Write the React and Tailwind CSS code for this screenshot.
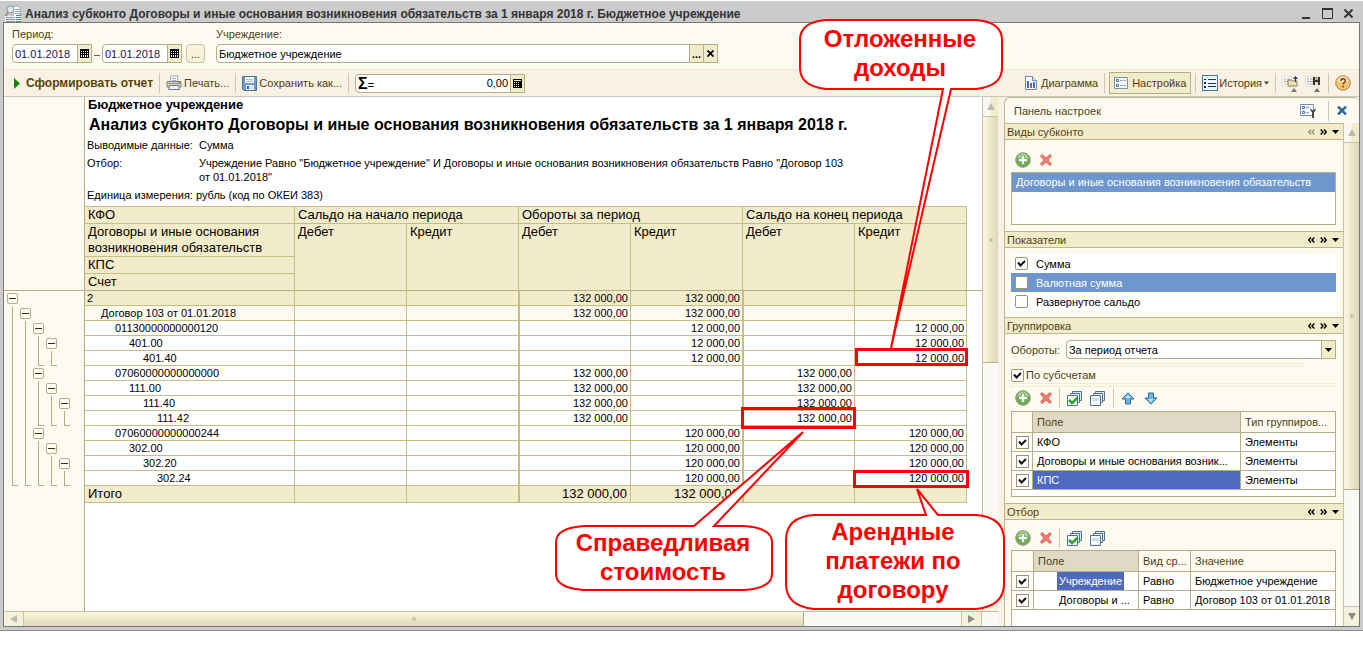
import { useState } from 'react'
import clsx from 'clsx'

const entries = [
  { name: '2', tree: 'b', cells: ['', '', '132 000,00', '132 000,00', '', ''], tone: 'bg-[#f2eccb]' },
  { name: 'Договор 103 от 01.01.2018', tree: 'lb', cells: ['', '', '132 000,00', '132 000,00', '', ''], tone: 'bg-[#fdfbf0]' },
  { name: '01130000000000120', tree: 'llb', cells: ['', '', '', '12 000,00', '', '12 000,00'] },
  { name: '401.00', tree: 'lllb', cells: ['', '', '', '12 000,00', '', '12 000,00'] },
  { name: '401.40', tree: 'llee', cells: ['', '', '', '12 000,00', '', '12 000,00'] },
  { name: '07060000000000000', tree: 'llb', cells: ['', '', '132 000,00', '', '132 000,00', ''] },
  { name: '111.00', tree: 'lllb', cells: ['', '', '132 000,00', '', '132 000,00', ''] },
  { name: '111.40', tree: 'llllb', cells: ['', '', '132 000,00', '', '132 000,00', ''] },
  { name: '111.42', tree: 'lleee', cells: ['', '', '132 000,00', '', '132 000,00', ''] },
  { name: '07060000000000244', tree: 'llb', cells: ['', '', '', '120 000,00', '', '120 000,00'] },
  { name: '302.00', tree: 'lllb', cells: ['', '', '', '120 000,00', '', '120 000,00'] },
  { name: '302.20', tree: 'llllb', cells: ['', '', '', '120 000,00', '', '120 000,00'] },
  { name: '302.24', tree: 'eeeee', cells: ['', '', '', '120 000,00', '', '120 000,00'] },
]

const indents = ['pl-0.5', 'pl-4', 'pl-[30px]', 'pl-11', 'pl-[58px]', 'pl-[30px]', 'pl-11', 'pl-[58px]', 'pl-[72px]', 'pl-[30px]', 'pl-11', 'pl-[58px]', 'pl-[72px]']

/* ---------- icons ---------- */

const ReportIcon = () => (
  <svg width="16" height="18" viewBox="0 0 16 18" className="shrink-0">
    <path d="M8 1h5l2 2v9H8z" fill="#fff" stroke="#8e9aa8" />
    <path d="M10 4.500h4M10 6.500h4M10 8.500h4" stroke="#8e9aa8" />
    <path d="M0 11h10v7H0zM10 11h6v7h-6z" fill="#f3f6fa" />
    <circle cx="5.500" cy="4.500" r="3.500" fill="#d9ecf7" stroke="#8a8f96" />
    <path d="M3 7.500 .5 11" stroke="#b98a5a" strokeWidth="2" />
    <path d="M1 12.500h9M1 14.500h9M1 16.500h9" stroke="#8b98a6" />
    <path d="M11 10.500h5M11 12.500h5M11 14.500h5M11 16.500h5" stroke="#4d7fc0" />
  </svg>
)

const CalendarIcon = () => (
  <svg width="9" height="9" viewBox="0 0 9 9" shapeRendering="crispEdges">
    <path d="M0 0h9v9H0z" fill="#000" />
    <path d="M1 2h1v1H1zM3 2h1v1H3zM5 2h1v1H5zM7 2h1v1H7zM1 4h1v1H1zM3 4h1v1H3zM5 4h1v1H5zM7 4h1v1H7zM1 6h1v2H1zM3 6h1v2H3zM5 6h1v2H5zM7 6h1v2H7z" fill="#fff" />
  </svg>
)

const CalcIcon = () => (
  <svg width="9" height="9" viewBox="0 0 9 9" shapeRendering="crispEdges">
    <path d="M0 0h9v9H0z" fill="#000" />
    <path d="M1 1h7v1H1zM1 3h1v1H1zM3 3h1v1H3zM5 3h1v1H5zM1 5h1v1H1zM3 5h1v1H3zM5 5h1v1H5zM1 7h1v1H1zM3 7h1v1H3zM5 7h1v1H5z" fill="#f2eccb" />
  </svg>
)

const PrinterIcon = () => (
  <svg width="16" height="16" viewBox="0 0 16 16" className="shrink-0">
    <path d="M5 1h7l-1 6H4z" fill="#fff" stroke="#9aa6b8" />
    <path d="M1 6.500h14v5.500H1z" fill="#d3d0c8" stroke="#86837b" />
    <path d="M1 8.500h14" stroke="#9d9a92" />
    <path d="M3.500 10.500h9l1 4h-11z" fill="#f5f3ea" stroke="#6f7c8f" />
    <circle cx="13" cy="8" r="1" fill="#3fae3f" />
    <path d="M6 3.500h4M6 5.500h4" stroke="#8fb3dc" />
  </svg>
)

const SaveIcon = () => (
  <svg width="15" height="15" viewBox="0 0 15 15" className="shrink-0">
    <path d="M.5.5h14v14H2L.5 13z" fill="#6f9cc0" stroke="#4c7899" />
    <path d="M3 1h9v6H3z" fill="#f2f7fb" />
    <path d="M4 3.500h7M4 5.500h7" stroke="#b4c6d6" />
    <path d="M4 9h8v5H4z" fill="#dfe8ee" />
    <path d="M5 10h2v3H5z" fill="#3f6c90" />
  </svg>
)

const ChartIcon = () => (
  <svg width="12" height="14" viewBox="0 0 12 14" className="shrink-0">
    <path d="M.5.5h7l4 4v9H.5z" fill="#fbfdff" stroke="#6f8aa8" />
    <path d="M7.500.5v4h4" fill="#dce8f4" stroke="#6f8aa8" />
    <path d="M2 5h2v7H2z" fill="#3f73c9" />
    <path d="M5 7h2v5H5z" fill="#d8433b" />
    <path d="M8 6h2v6H8z" fill="#3f73c9" />
  </svg>
)

const SettingsIcon = () => (
  <svg width="14" height="12" viewBox="0 0 14 12" className="shrink-0">
    <path d="M.5.5h13v11H.5z" fill="#f7fafd" stroke="#7393b5" />
    <path d="M2.500 2.500h2v2h-2zM2.500 7.500h2v2h-2z" fill="#fff" stroke="#4a6fa5" />
    <path d="M6 3.500h3M10 3.500h2M6 8.500h3M10 8.500h2" stroke="#8aa0ba" />
  </svg>
)

const HistoryIcon = () => (
  <svg width="16" height="16" viewBox="0 0 16 16" shapeRendering="crispEdges" className="shrink-0">
    <path d="M.5.5h15v15H.5z" fill="#eaf6fd" stroke="#3d7ab0" />
    <path d="M2 4h2v1H2zM2 7h2v2H2zM2 11h2v2H2z" fill="#112233" />
    <path d="M6 4.500h8M6 8h8M6 11.500h8" stroke="#123a5e" />
  </svg>
)

const LoadSettingsIcon = () => (
  <svg width="17" height="17" viewBox="0 0 17 17" className="shrink-0">
    <path d="M.5 1.500h9v10h-9z" fill="#fff" stroke="#e3e1d6" />
    <path d="M2 4h2M5 4h3M2 6.500h2M5 6.500h3M2 9h2M5 9h3" stroke="#9a9a92" />
    <path d="M6 5h4l1 1h4v5H6z" fill="#f0e0ac" stroke="#8b8368" />
    <path d="M13.500 7V2" stroke="#1d2f74" />
    <path d="M11 4l2.500-3L16 4z" fill="#1d2f74" />
    <path d="M9 17h6l-3-4z" fill="#77746c" />
  </svg>
)

const StoreSettingsIcon = () => (
  <svg width="17" height="17" viewBox="0 0 17 17" className="shrink-0">
    <path d="M.5 1.500h9v10h-9z" fill="#fff" stroke="#e3e1d6" />
    <path d="M2 4h2M5 4h3M2 6.500h2M5 6.500h3M2 9h2M5 9h3" stroke="#9a9a92" />
    <path d="M8 2h7v8H8z" fill="#3a362c" />
    <path d="M10 2h3v3h-3z" fill="#b9b5a5" />
    <path d="M10 7h3v3h-3z" fill="#ddd9c9" />
    <path d="M9 17h6l-3-4z" fill="#77746c" />
  </svg>
)

const HelpIcon = () => (
  <svg width="16" height="16" viewBox="0 0 16 16" className="shrink-0">
    <circle cx="8" cy="8" r="7.300" fill="#f6c16b" stroke="#a58a63" />
    <path d="M2.500 6.500a5.500 5 0 0 1 11 0q-5.500 2-11 0z" fill="#fbe3b5" />
    <path d="M5.800 6q0-2.300 2.300-2.300T10.300 6c0 1.400-2.200 1.600-2.200 3.300" fill="none" stroke="#6d4410" strokeWidth="1.500" />
    <path d="M7.300 10.800h1.600v1.600H7.300z" fill="#6d4410" />
  </svg>
)

const AddIcon = () => (
  <svg width="16" height="16" viewBox="0 0 16 16" className="shrink-0">
    <circle cx="8" cy="8" r="7.300" fill="#6fae54" stroke="#8a9a80" />
    <path d="M2.500 6.500a5.500 5 0 0 1 11 0q-5.500 2-11 0z" fill="#a8d493" />
    <path d="M6.500 3.500h3v3h3v3h-3v3h-3v-3h-3v-3h3z" fill="#fff" stroke="#5c9444" strokeWidth=".6" />
  </svg>
)

const RemoveIcon = () => (
  <svg width="12" height="12" viewBox="0 0 12 12" className="shrink-0">
    <path d="M2 .5 6 4 10 .5 11.500 2 8 6l3.500 4-1.500 1.500L6 8l-4 3.500L.5 10 4 6 .5 2z" fill="#f07d73" stroke="#d9534a" strokeWidth=".8" />
  </svg>
)

const StackIcon = ({ checked }) => (
  <svg width="16" height="15" viewBox="0 0 16 15" className="shrink-0">
    <path d="M5.500.5h9v9h-9z" fill="#d7e8f5" stroke="#4d7391" />
    <path d="M3.500 2.500h9v9h-9z" fill="#e6f1f9" stroke="#4d7391" />
    <path d="M.5 4.500h10v10H.5z" fill="#f6fafd" stroke="#4d7391" />
    {checked ? (
      <path d="m2 9 3 3L11 6.500" fill="none" stroke="#35a02c" strokeWidth="2.500" />
    ) : (
      <path d="M2 7h7v3H2z" fill="#c9e0f3" />
    )}
  </svg>
)

const MoveIcon = ({ down }) => (
  <svg width="14" height="13" viewBox="0 0 14 13" className={clsx('shrink-0', down && 'rotate-180')}>
    <path d="M7 .8 13 7H9.500v5h-5V7H1z" fill="#6db5e6" stroke="#2c6d9f" />
    <path d="M7 2.500 10 6H4z" fill="#b9dff6" />
  </svg>
)

const Chevrons = ({ flip, muted }) => (
  <svg width="7" height="6" viewBox="0 0 7 6" className={clsx(flip && 'rotate-180', muted ? 'text-[#99947e]' : 'text-black')}>
    <path d="M3 .5.800 3 3 5.500M6.300.5 4 3l2.300 2.500" fill="none" stroke="currentColor" strokeWidth="1.400" />
  </svg>
)

const Caret = ({ className }) => (
  <svg width="7" height="4" viewBox="0 0 7 4" className={className}>
    <path d="M0 0h7L3.500 4z" fill="currentColor" />
  </svg>
)

/* ---------- small controls ---------- */

const Divider = () => <span className="h-5 w-px shrink-0 bg-[#cdc8b4]" />

function ToolButton({ icon, children, className, label }) {
  return (
    <button type="button" aria-label={label} className={clsx('flex items-center whitespace-nowrap', className)}>
      {icon}
      {children}
    </button>
  )
}

function DateField({ id, label }) {
  return (
    <div className="flex h-[19px] w-20 rounded-l-sm border border-[#b5ad84] bg-white">
      <input id={id} aria-label={label} defaultValue="01.01.2018" className="w-16 min-w-0 px-0.5 text-[#1c1440] outline-none" />
      <button type="button" aria-label="Выбрать дату" className="flex flex-1 items-center justify-center border-l border-[#b5ad84] bg-[#f2eccb]">
        <CalendarIcon />
      </button>
    </div>
  )
}

function Check({ id, label, square, defaultChecked = false }) {
  return (
    <span className="relative flex size-[13px] shrink-0">
      <input
        id={id}
        type="checkbox"
        aria-label={label}
        defaultChecked={defaultChecked}
        className={clsx('peer size-[13px] appearance-none border border-[#9c946c] bg-white', !square && 'rounded-xs')}
      />
      <svg viewBox="0 0 13 13" className="pointer-events-none absolute inset-0 hidden peer-checked:block">
        <path d="m3 5.500 2.500 3L10 4" fill="none" stroke="#111" strokeWidth="2" />
      </svg>
    </span>
  )
}

function Section({ title, atStart, children, className }) {
  return (
    <section>
      <header className="flex h-[17px] items-center border-y border-[#bdb58c] bg-[#f2eccb] pr-1">
        <h2 className="flex-1 pl-0.5 leading-4">{title}</h2>
        <div className="flex items-center gap-[5px]">
          <button type="button" aria-label="Назад"><Chevrons muted={atStart} /></button>
          <button type="button" aria-label="Вперед"><Chevrons flip /></button>
          <button type="button" aria-label="Меню"><Caret className="text-black" /></button>
        </div>
      </header>
      <div className={clsx('pr-[7px] pl-1.5', className)}>{children}</div>
    </section>
  )
}

function EditTools({ stacks, moves }) {
  return (
    <div className="flex items-center gap-[7px] pl-1">
      <button type="button" aria-label="Добавить"><AddIcon /></button>
      <button type="button" aria-label="Удалить" className="pl-0.5"><RemoveIcon /></button>
      {stacks && (
        <>
          <Divider />
          <button type="button" aria-label="Установить флажки"><StackIcon checked /></button>
          <button type="button" aria-label="Снять флажки"><StackIcon /></button>
        </>
      )}
      {moves && (
        <>
          <Divider />
          <button type="button" aria-label="Вверх"><MoveIcon /></button>
          <button type="button" aria-label="Вниз" className="pl-0.5"><MoveIcon down /></button>
        </>
      )}
    </div>
  )
}

function VerticalScroll({ thumb }) {
  return (
    <div className="flex w-4 shrink-0 flex-col border-l border-[#c9c29c] bg-[#faf9f6]">
      <button type="button" aria-label="Прокрутить вверх" className="flex h-5 items-center justify-center border-b border-[#c9c29c] bg-linear-to-r from-[#f8f7f2] from-45% to-[#f2eccb] to-55% text-[#bdbab0]">
        <svg width="8" height="7" viewBox="0 0 8 7"><path d="M4 0 8 7H0z" fill="currentColor" /></svg>
      </button>
      <div className={clsx('flex items-center justify-center border-b border-[#b5ad84] bg-linear-to-r from-[#f8f4df] from-20% via-[#f2eccb] via-35% to-[#ddd6bd]', thumb)}>
        <span className="size-1 rounded-full bg-[#c9c2a8]" />
      </div>
      <span className="flex-1" />
      <button type="button" aria-label="Прокрутить вниз" className="flex h-5 items-center justify-center border-t border-[#c9c29c] bg-[#f5f1dd] text-[#8f8c84]">
        <svg width="8" height="7" viewBox="0 0 8 7"><path d="M0 0h8L4 7z" fill="currentColor" /></svg>
      </button>
    </div>
  )
}

/* ---------- report ---------- */

const treeMarks = {
  b: (
    <button type="button" aria-label="Свернуть" className="mt-0.5 flex h-[11px] w-[11px] items-center justify-center rounded-xs border border-[#b5ad84] bg-[#fffdf5]">
      <span className="h-px w-[7px] bg-[#3a2e08]" />
    </button>
  ),
  l: <span className="h-full w-px bg-[#b5ad84]" />,
  e: <span className="mr-px ml-1.5 h-full w-1.5 border-b border-l border-[#b5ad84]" />,
}

function Gutter() {
  return (
    <div className="w-[81px] shrink-0 border-r border-[#b5ad84] bg-[#fdfbf0]">
      <div className="h-[194px] border-b border-[#b5ad84]" />
      {entries.map((entry) => (
        <div key={entry.name} className="flex h-[15px] pl-0.5">
          {[...entry.tree].map((mark, i) => (
            <span key={i} className="flex w-[13px] justify-center">
              {treeMarks[mark]}
            </span>
          ))}
        </div>
      ))}
    </div>
  )
}

function ReportTable() {
  const head = 'border-b border-r border-[#c8bd83] px-[3px] text-left align-top font-normal'
  const cell = 'border-b border-r border-[#c8bd83] px-0.5 text-right'
  return (
    <table className="w-[882px] shrink-0 table-fixed border-separate border-spacing-0 border-t border-[#c8bd83]">
      <colgroup>
        <col className="w-[210px]" />
        <col span={6} />
      </colgroup>
      <thead className="bg-[#f2eccb] text-[13px] leading-4">
        <tr className="h-[17px]">
          <th className={head}>КФО</th>
          <th colSpan={2} className={head}>Сальдо на начало периода</th>
          <th colSpan={2} className={head}>Обороты за период</th>
          <th colSpan={2} className={head}>Сальдо на конец периода</th>
        </tr>
        <tr className="h-[33px]">
          <th className={head}>Договоры и иные основания возникновения обязательств</th>
          {['Дебет', 'Кредит', 'Дебет', 'Кредит', 'Дебет', 'Кредит'].map((title, i) => (
            <th key={i} rowSpan={3} className={clsx(head, 'border-b-[#b5ad84]')}>{title}</th>
          ))}
        </tr>
        <tr className="h-[17px]"><th className={head}>КПС</th></tr>
        <tr className="h-[17px]"><th className={clsx(head, 'border-b-[#b5ad84]')}>Счет</th></tr>
      </thead>
      <tbody className="text-[11px] leading-[14px]">
        {entries.map((entry, row) => (
          <tr key={entry.name} className={clsx('h-[15px]', entry.tone)}>
            <td className={clsx('border-b border-r border-[#c8bd83]', indents[row])}>{entry.name}</td>
            {entry.cells.map((value, i) => (
              <td key={i} className={clsx(cell, (i === 2 || i === 4) && 'border-l')}>{value}</td>
            ))}
          </tr>
        ))}
      </tbody>
      <tfoot className="bg-[#f2eccb] text-[13px] leading-4">
        <tr className="h-[17px]">
          <th className={head}>Итого</th>
          {['', '', '132 000,00', '132 000,00', '', ''].map((value, i) => (
            <td key={i} className={clsx(cell, 'pr-[3px]', (i === 2 || i === 4) && 'border-l')}>{value}</td>
          ))}
        </tr>
      </tfoot>
    </table>
  )
}

function Report() {
  return (
    <div className="flex min-w-0 flex-1 flex-col">
      <div className="flex min-h-0 flex-1">
        <div className="flex min-w-0 flex-1 overflow-hidden bg-white text-black">
          <Gutter />
          <div className="min-w-0 flex-1">
            <div className="h-[109px] px-0.5 text-[11px] leading-[14px]">
              <p className="pl-px text-[13px] leading-4 font-bold">Бюджетное учреждение</p>
              <h1 className="pt-0.5 pl-0.5 text-[16px] leading-5 font-bold whitespace-nowrap">
                Анализ субконто Договоры и иные основания возникновения обязательств за 1 января 2018 г.
              </h1>
              <dl className="grid grid-cols-[112px_660px] gap-y-1 pt-[3px]">
                <dt>Выводимые данные:</dt>
                <dd>Сумма</dd>
                <dt>Отбор:</dt>
                <dd>
                  Учреждение Равно "Бюджетное учреждение" И Договоры и иные основания возникновения обязательств Равно "Договор 103 <br />
                  от 01.01.2018"
                </dd>
              </dl>
              <p className="pt-1">Единица измерения: рубль (код по ОКЕИ 383)</p>
            </div>
            <div className="flex items-start">
              <ReportTable />
              <span className="h-[85px] flex-1 border-b border-[#b5ad84]" />
            </div>
          </div>
        </div>
        <VerticalScroll thumb="h-[246px]" />
      </div>
      <div className="flex h-[15px] shrink-0 border-t border-[#c9c29c] bg-[#faf9f6] pr-4">
        <button type="button" aria-label="Прокрутить влево" className="flex w-5 items-center justify-center border-r border-[#c9c29c] bg-[#f5f1dd] text-[#bdbab0]">
          <svg width="7" height="8" viewBox="0 0 7 8"><path d="M7 0v8L0 4z" fill="currentColor" /></svg>
        </button>
        <div className="flex w-[780px] items-center justify-center border-r border-[#b5ad84] bg-linear-to-b from-[#f8f4df] from-20% via-[#f2eccb] via-40% to-[#ddd6bd]">
          <span className="size-1 rounded-full bg-[#c9c2a8]" />
        </div>
        <span className="flex-1" />
        <button type="button" aria-label="Прокрутить вправо" className="flex w-[21px] items-center justify-center border-x border-[#c9c29c] bg-[#f5f1dd] text-[#8f8c84]">
          <svg width="7" height="8" viewBox="0 0 7 8"><path d="M0 0v8l7-4z" fill="currentColor" /></svg>
        </button>
      </div>
    </div>
  )
}

/* ---------- settings panel ---------- */

const fields = [
  { name: 'КФО', kind: 'Элементы' },
  { name: 'Договоры и иные основания возник...', kind: 'Элементы' },
  { name: 'КПС', kind: 'Элементы', selected: true },
]

const filters = [
  { name: 'Учреждение', kind: 'Равно', value: 'Бюджетное учреждение', selected: true },
  { name: 'Договоры и ...', kind: 'Равно', value: 'Договор 103 от 01.01.2018' },
]

const gridHead = 'whitespace-nowrap border-b border-r border-[#b5ad84] pl-1 text-left font-normal'
const gridCell = 'whitespace-nowrap border-b border-r border-[#b5ad84] pl-1'

function SettingsPanel() {
  return (
    <aside className="ml-1.5 flex w-[355px] shrink-0 flex-col rounded-t-md border border-r-0 border-b-0 border-[#bdb58c] bg-[#fdfbf0]">
      <div className="flex h-[25px] shrink-0 items-center gap-3 pr-3 pl-[9px]">
        <h2 className="flex-1">Панель настроек</h2>
        <button type="button" aria-label="Настройки панели">
          <svg width="16" height="14" viewBox="0 0 16 14">
            <path d="M.5.5h13v11H.5z" fill="#f7fafd" stroke="#7393b5" />
            <path d="M2.500 2.500h2v2h-2zM2.500 7.500h2v2h-2z" fill="#fff" stroke="#4a6fa5" />
            <path d="M6 3.500h3M6 8.500h3" stroke="#8aa0ba" />
            <path d="M10.500 4v3l1.500 1v6h2V8l1.500-1V4l-1.500 2h-2z" fill="#4b4b4b" />
          </svg>
        </button>
        <Divider />
        <button type="button" aria-label="Закрыть панель" className="-ml-1">
          <svg width="10" height="9" viewBox="0 0 10 9"><path d="m1 .5 8 8m0-8-8 8" stroke="#33699a" strokeWidth="2.500" /></svg>
        </button>
      </div>
      <div className="flex min-h-0 flex-1">
        <div className="min-w-0 flex-1 overflow-hidden">
          <Section title="Виды субконто" atStart className="pt-3 pb-1.5">
            <EditTools />
            <ul className="mt-1 h-[53px] border border-[#b5ad84] bg-white">
              <li className="h-[19px] bg-[#6f97cf] pl-1 leading-[19px] whitespace-nowrap text-white">Договоры и иные основания возникновения обязательств</li>
            </ul>
          </Section>

          <Section title="Показатели" className="py-1.5">
            <ul className="bg-white text-black">
              {['Сумма', 'Валютная сумма', 'Развернутое сальдо'].map((item, i) => (
                <li key={item} className={clsx('flex h-[19px] items-center gap-2 pl-1', i === 1 && 'bg-[#6f97cf] text-white')}>
                  <Check id={'measure-' + i} defaultChecked={i === 0} />
                  <label htmlFor={'measure-' + i}>{item}</label>
                </li>
              ))}
            </ul>
          </Section>

          <Section title="Группировка" className="py-1.5">
            <div className="flex h-[19px] items-center gap-1.5">
              <label htmlFor="turnover">Обороты:</label>
              <div className="relative flex h-[19px] flex-1">
                <select id="turnover" className="w-full appearance-none rounded-l-sm border border-[#b5ad84] bg-white px-0.5 text-black">
                  <option>За период отчета</option>
                </select>
                <span className="pointer-events-none absolute inset-y-0 right-0 flex w-[15px] items-center justify-center border border-[#b5ad84] bg-[#f2eccb] text-black">
                  <Caret />
                </span>
              </div>
            </div>
            <div className="mt-1 mr-8 h-1 rounded-full border border-[#f2eccb]" />
            <div className="flex h-4 items-center gap-0.5">
              <Check id="subaccounts" defaultChecked />
              <label htmlFor="subaccounts">По субсчетам</label>
            </div>
            <div className="h-1 rounded-full border border-[#f2eccb]" />
            <div className="pt-px pb-[3px]">
              <EditTools stacks moves />
            </div>
            <div className="h-[86px] border border-[#b5ad84] bg-white">
              <table className="w-full table-fixed border-separate border-spacing-0 text-black">
                <colgroup>
                  <col className="w-[21px]" />
                  <col />
                  <col className="w-[94px]" />
                </colgroup>
                <thead className="bg-[#fdfbf0] text-[#4f3f12]">
                  <tr className="h-[21px]">
                    <th className={gridHead} aria-label="Использование" />
                    <th className={clsx(gridHead, 'bg-[#dfd9c6]')}>Поле</th>
                    <th className={clsx(gridHead, 'border-r-0')}>Тип группиров...</th>
                  </tr>
                </thead>
                <tbody>
                  {fields.map((field) => (
                    <tr key={field.name} className="h-[19px]">
                      <td className="border-r border-b border-[#b5ad84] pl-1"><Check square label={field.name} defaultChecked /></td>
                      <td className={clsx(gridCell, field.selected && 'bg-[#5069c0] text-white')}>{field.name}</td>
                      <td className={clsx(gridCell, 'border-r-0')}>{field.kind}</td>
                    </tr>
                  ))}
                </tbody>
              </table>
            </div>
          </Section>

          <Section title="Отбор" className="pt-2">
            <EditTools stacks />
            <div className="mt-0.5 h-24 border border-[#b5ad84] bg-white">
              <table className="w-full table-fixed border-separate border-spacing-0 text-black">
                <colgroup>
                  <col className="w-[22px]" />
                  <col className="w-[105px]" />
                  <col className="w-[52px]" />
                  <col />
                </colgroup>
                <thead className="bg-[#fdfbf0] text-[#4f3f12]">
                  <tr className="h-[21px]">
                    <th className={gridHead} aria-label="Использование" />
                    <th className={clsx(gridHead, 'bg-[#dfd9c6]')}>Поле</th>
                    <th className={gridHead}>Вид ср...</th>
                    <th className={clsx(gridHead, 'border-r-0')}>Значение</th>
                  </tr>
                </thead>
                <tbody>
                  {filters.map((item) => (
                    <tr key={item.name} className="h-[19px]">
                      <td className="border-r border-b border-[#b5ad84] pl-1"><Check square label={item.name} defaultChecked /></td>
                      <td className="border-r border-b border-[#b5ad84] pl-[23px] whitespace-nowrap">
                        <span className={clsx('inline-block px-0.5 align-top leading-[18px]', item.selected && 'bg-[#5069c0] text-white')}>{item.name}</span>
                      </td>
                      <td className={gridCell}>{item.kind}</td>
                      <td className={clsx(gridCell, 'border-r-0')}>{item.value}</td>
                    </tr>
                  ))}
                </tbody>
              </table>
            </div>
          </Section>
        </div>
        <VerticalScroll thumb="h-[347px]" />
      </div>
    </aside>
  )
}

/* ---------- callouts over the report ---------- */

function Callouts() {
  const text = 'absolute flex flex-col items-center justify-center text-center text-[24px] leading-[29px] font-bold text-[#ff0000] whitespace-nowrap'
  return (
    <div className="pointer-events-none absolute inset-0">
      <span className="absolute top-[348px] left-[855px] h-[18px] w-[113px] border-3 border-[#ff0000]" />
      <span className="absolute top-[407px] left-[741px] h-[22px] w-[115px] border-3 border-[#ff0000]" />
      <span className="absolute top-[470px] left-[853px] h-[18px] w-[116px] border-3 border-[#ff0000]" />
      <svg width="1010" height="620" viewBox="0 0 1010 620" className="absolute top-0 left-0" fill="#fff" stroke="#ff0000" strokeWidth="2">
        <path d="M826 20H976Q1002 22 1002 40V68Q1002 86 976 89H951L891 348 943 89H826Q800 86 800 68V40Q800 22 826 20Z" />
        <path d="M584 526H694L803 432 714 526H744Q772 528 772 542V574Q772 588 744 590H584Q556 588 556 574V542Q556 528 584 526Z" />
        <path d="M814 515H926L917 489 938 515H976Q1004 517 1004 540V584Q1004 606 976 609H814Q786 606 786 584V540Q786 517 814 515Z" />
      </svg>
      <p className={clsx(text, 'top-[18px] left-[800px] h-[69px] w-[200px]')}><span>Отложенные</span><span>доходы</span></p>
      <p className={clsx(text, 'top-[525px] left-[556px] h-16 w-[214px]')}><span>Справедливая</span><span>стоимость</span></p>
      <p className={clsx(text, 'top-[513px] left-[785px] h-[94px] w-[216px]')}><span>Арендные</span><span>платежи по</span><span>договору</span></p>
    </div>
  )
}

export default function App() {
  const [panelOpen, setPanelOpen] = useState(true)

  return (
    <div className="relative flex h-screen flex-col overflow-hidden bg-white pt-px pb-[17px] font-['Liberation_Sans',Arial,sans-serif] text-[11px] leading-[14px] text-[#4f3f12]">
      <main className="flex min-h-0 flex-1 flex-col border-b border-[#8d8d8d] bg-[#cbcbcb] pr-[3px] pb-[3px] pl-[3px]">
        <div className="flex h-[21px] shrink-0 items-center gap-1 pt-1 pr-[7px] pl-0.5 text-[#333]">
          <ReportIcon />
          <p className="flex-1 text-[12px] font-bold whitespace-nowrap">
            Анализ субконто Договоры и иные основания возникновения обязательств за 1 января 2018 г. Бюджетное учреждение
          </p>
          <div className="flex items-center gap-[11px]">
            <button type="button" aria-label="Свернуть"><svg width="10" height="11" viewBox="0 0 10 11"><path d="M1 10h8" stroke="#333" strokeWidth="2" /></svg></button>
            <button type="button" aria-label="Развернуть"><svg width="11" height="11" viewBox="0 0 11 11"><path d="M.5 1.500h10v9H.5z" fill="none" stroke="#333" /><path d="M0 1h11" stroke="#333" strokeWidth="2" /></svg></button>
            <button type="button" aria-label="Закрыть"><svg width="9" height="9" viewBox="0 0 9 9"><path d="m.5.5 8 8m0-8-8 8" stroke="#333" strokeWidth="2" /></svg></button>
          </div>
        </div>

        <div className="flex min-h-0 flex-1 flex-col border border-[#777] bg-[#f8f1e4]">
          <div className="flex h-[47px] shrink-0 gap-[11px] border-b border-[#f2e9d0] bg-[#fdfbf0] pt-1 pl-2">
            <div>
              <label htmlFor="from" className="block">Период:</label>
              <div className="mt-[3px] flex items-center">
                <DateField id="from" label="Начало периода" />
                <span className="w-[10px] text-center">–</span>
                <DateField id="to" label="Конец периода" />
                <button type="button" aria-label="Выбрать период" className="ml-1 h-[19px] w-[19px] rounded-sm border border-[#c9c29c] bg-[#f8f1dc]">...</button>
              </div>
            </div>
            <div>
              <label htmlFor="org" className="block">Учреждение:</label>
              <div className="mt-[3px] flex h-[19px] w-[502px] rounded-l-sm border border-[#b5ad84] bg-white">
                <input id="org" defaultValue="Бюджетное учреждение" className="min-w-0 flex-1 px-0.5 text-black outline-none" />
                <button type="button" aria-label="Выбрать" className="w-3.5 border-l border-[#b5ad84] bg-[#f2eccb] font-bold text-black">...</button>
                <button type="button" aria-label="Очистить" className="flex w-3.5 items-center justify-center border-l border-[#b5ad84] bg-[#f2eccb]">
                  <svg width="7" height="7" viewBox="0 0 7 7"><path d="m.5.5 6 6m0-6-6 6" stroke="#000" strokeWidth="1.800" /></svg>
                </button>
              </div>
            </div>
          </div>

          <div className="flex h-[27px] shrink-0 items-center gap-1.5 border-b border-[#cbc8bd] pr-2 pl-2.5">
            <ToolButton
              className="gap-1.5 text-[12px] font-bold text-[#5c4400]"
              icon={<svg width="6" height="11" viewBox="0 0 6 11"><path d="M0 0 6 5.500 0 11z" fill="#0a8a0a" /></svg>}
            >
              Сформировать отчет
            </ToolButton>
            <Divider />
            <ToolButton icon={<PrinterIcon />} className="gap-0.5">Печать...</ToolButton>
            <Divider />
            <ToolButton icon={<SaveIcon />} className="gap-0.5">Сохранить как...</ToolButton>
            <Divider />
            <div className="flex h-[19px] w-[170px] rounded-l-sm border border-[#b5ad84] bg-white text-black">
              <label htmlFor="sum" className="pl-0.5 leading-[17px]"><b className="text-[16px]">Σ</b>=</label>
              <input id="sum" defaultValue="0,00" className="min-w-0 flex-1 pr-0.5 text-right outline-none" />
              <button type="button" aria-label="Калькулятор" className="flex w-3.5 items-center justify-center border-l border-[#b5ad84] bg-[#f2eccb]"><CalcIcon /></button>
            </div>
            <span className="flex-1" />
            <ToolButton icon={<ChartIcon />} className="gap-1">Диаграмма</ToolButton>
            <Divider />
            <button
              type="button"
              aria-pressed={panelOpen}
              onClick={() => setPanelOpen(!panelOpen)}
              className="-mx-0.5 flex h-[22px] items-center gap-1 border border-[#b5ad84] bg-[#f2eccb] px-1"
            >
              <SettingsIcon />
              Настройка
            </button>
            <Divider />
            <ToolButton icon={<HistoryIcon />} className="gap-px">История <Caret className="ml-px w-[5px]" /></ToolButton>
            <Divider />
            <ToolButton label="Загрузить настройки" icon={<LoadSettingsIcon />} />
            <ToolButton label="Сохранить настройки" icon={<StoreSettingsIcon />} />
            <Divider />
            <ToolButton label="Справка" icon={<HelpIcon />} />
          </div>

          <div className="flex min-h-0 flex-1">
            <Report />
            {panelOpen && <SettingsPanel />}
          </div>
        </div>
      </main>
      <Callouts />
    </div>
  )
}
